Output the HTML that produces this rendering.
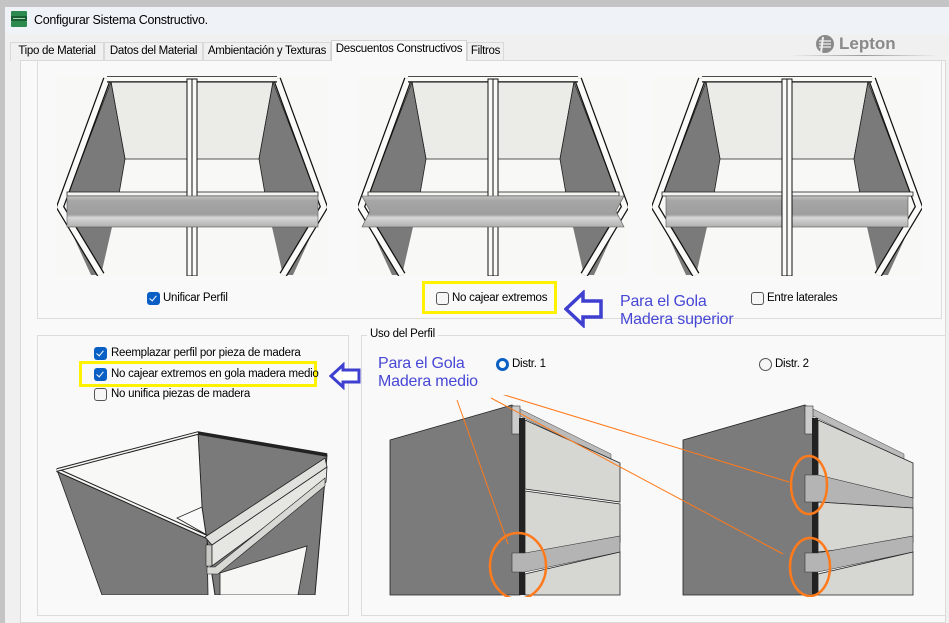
<!DOCTYPE html>
<html><head><meta charset="utf-8"><style>
*{margin:0;padding:0;box-sizing:border-box}
body{width:949px;height:623px;overflow:hidden;background:#c4c4c4;font-family:"Liberation Sans",sans-serif;font-size:12px;color:#000;position:relative}
.win{position:absolute;left:5px;top:7px;width:944px;height:616px;background:#f0f0f0}
.title{position:absolute;left:0;top:0;width:944px;height:27px;background:#eff3f8}
.abs{position:absolute}
.tab{position:absolute;top:42px;height:19px;border:1px solid #d9d9d9;border-bottom:none;background:#f0f0f0;font-size:11.5px;letter-spacing:-0.3px;padding:2px 0 0 0;text-align:center}
.page{position:absolute;left:20px;top:60px;width:926px;height:563px;background:#f9f9f9;border:1px solid #d9d9d9}
.box{position:absolute;border:1px solid #dcdcdc}
.cb{position:absolute;width:13px;height:13px;border-radius:3px}
.on{background:#0a5fc4}
.on:after{content:"";position:absolute;left:4px;top:2px;width:3px;height:6px;border:solid #fff;border-width:0 1.3px 1.3px 0;transform:rotate(40deg)}
.off{border:1px solid #555;background:#f6f6f6}
.lbl{position:absolute;font-size:11.5px;letter-spacing:-0.25px;white-space:nowrap}
.blue{position:absolute;color:#4747d6;font-size:16px;line-height:18px;letter-spacing:-0.2px}
</style></head><body>
<div class="win"></div>
<div class="title abs" style="left:5px;top:7px"></div>
<svg class="abs" style="left:11px;top:11px" width="16" height="16"><rect x="0" y="0" width="16" height="6" rx="1" fill="#2d8a4e"/><rect x="0" y="5" width="16" height="5" fill="#1b5e34"/><rect x="0" y="10" width="16" height="6" rx="1" fill="#2d8a4e"/><rect x="2" y="7" width="12" height="1" fill="#9fd9b0"/></svg>
<div class="abs" style="left:34px;top:13px;font-size:12.5px;letter-spacing:-0.3px">Configurar Sistema Constructivo.</div>

<div class="tab" style="left:10px;width:94px">Tipo de Material</div>
<div class="tab" style="left:104px;width:99px">Datos del Material</div>
<div class="tab" style="left:203px;width:128px">Ambientación y Texturas</div>
<div class="tab" style="left:467px;width:37px">Filtros</div>
<div class="page"></div>
<div class="tab" style="left:331px;top:40px;height:21px;width:136px;background:#f9f9f9;border-color:#d0d0d0">Descuentos Constructivos</div>

<div class="abs" style="left:790px;top:55px;width:148px;height:1px;background:linear-gradient(90deg,#f0f0f0,#999,#f0f0f0)"></div>
<svg class="abs" style="left:814px;top:33px" width="22" height="22"><circle cx="11" cy="11" r="9" fill="#8a8a8a"/><path d="M5 8h12M5 11h12M5 14h12" stroke="#f0f0f0" stroke-width="1.2"/><path d="M9 4l-2 16" stroke="#f0f0f0" stroke-width="2"/></svg>
<div class="abs" style="left:839px;top:34px;font-size:17px;font-weight:bold;color:#8a8a8a">Lepton</div>

<!-- top box -->
<div class="box" style="left:37px;top:60px;width:905px;height:259px;border-top:none"></div>

<svg width="0" height="0" style="position:absolute"><defs>
<linearGradient id="rg" x1="0" y1="0" x2="0" y2="1"><stop offset="0" stop-color="#c4c4c4"/><stop offset="0.15" stop-color="#a6a6a6"/><stop offset="0.6" stop-color="#9e9e9e"/><stop offset="0.7" stop-color="#d8d8d8"/><stop offset="0.85" stop-color="#c2c2c2"/><stop offset="1" stop-color="#b0b0b0"/></linearGradient>
<g id="cab">
<rect x="0" y="0" width="270" height="200" fill="#f8f8f6"/>
<polygon points="54,6 216,6 202,83 68,83" fill="#ebebe8" stroke="#222" stroke-width="0.8"/>
<polygon points="54,6 68,83 62,118 11,118" fill="#7a7a7a" stroke="#222" stroke-width="0.8"/>
<polygon points="216,6 202,83 208,118 259,118" fill="#7a7a7a" stroke="#222" stroke-width="0.8"/>
<polygon points="12,151 55,151 44,199 34,199" fill="#7a7a7a"/>
<polygon points="258,151 215,151 226,199 236,199" fill="#7a7a7a"/>
<polyline points="50,3 3,131 44,199" fill="none" stroke="#111" stroke-width="8"/>
<polyline points="50,3 3,131 44,199" fill="none" stroke="#fafaf8" stroke-width="5.5"/>
<polyline points="220,3 267,131 226,199" fill="none" stroke="#111" stroke-width="8"/>
<polyline points="220,3 267,131 226,199" fill="none" stroke="#fafaf8" stroke-width="5.5"/>
<line x1="50" y1="3" x2="220" y2="3" stroke="#111" stroke-width="7"/>
<line x1="50" y1="3" x2="220" y2="3" stroke="#fafaf8" stroke-width="4.5"/>
<rect x="10" y="116" width="251" height="4" fill="#f4f4f2" stroke="#222" stroke-width="0.8"/>
</g>
<g id="div"><rect x="130" y="3" width="10" height="197" fill="#fafaf8" stroke="#111" stroke-width="1"/><line x1="135" y1="3" x2="135" y2="200" stroke="#111" stroke-width="1"/></g>
</defs></svg>

<svg class="abs" style="left:57px;top:76px" width="270" height="200"><use href="#cab"/><use href="#div"/><rect x="10" y="120" width="251" height="31" fill="url(#rg)" stroke="#555" stroke-width="0.6"/></svg>
<svg class="abs" style="left:358px;top:76px" width="270" height="200"><use href="#cab"/><use href="#div"/><polygon points="4,120 266,120 258,135 266,151 4,151 12,135" fill="url(#rg)" stroke="#555" stroke-width="0.6"/></svg>
<svg class="abs" style="left:652px;top:76px" width="270" height="200"><use href="#cab"/><rect x="14" y="120" width="242" height="31" fill="url(#rg)" stroke="#555" stroke-width="0.6"/><use href="#div"/></svg>

<div class="cb on" style="left:147px;top:292px"></div><div class="lbl" style="left:163px;top:292px">Unificar Perfil</div>
<div class="abs" style="left:422px;top:281px;width:135px;height:33px;border:3px solid #fff200"></div>
<div class="cb off" style="left:436px;top:292px"></div><div class="lbl" style="left:452px;top:292px">No cajear extremos</div>
<svg class="abs" style="left:564px;top:290px" width="40" height="38"><polygon points="2,19 19,3 19,11 37,11 37,27 19,27 19,35" fill="#fff" stroke="#3f3fd0" stroke-width="3.5" stroke-linejoin="miter"/></svg>
<div class="blue" style="left:620px;top:293px">Para el Gola<br>Madera superior</div>
<div class="cb off" style="left:751px;top:292px"></div><div class="lbl" style="left:767px;top:292px">Entre laterales</div>

<!-- lower left box -->
<div class="box" style="left:37px;top:335px;width:312px;height:281px"></div>
<div class="cb on" style="left:94px;top:347px"></div><div class="lbl" style="left:111px;top:347px">Reemplazar perfil por pieza de madera</div>
<div class="abs" style="left:79px;top:361px;width:238px;height:26px;border:3px solid #fff200"></div>
<div class="cb on" style="left:94px;top:368px"></div><div class="lbl" style="left:111px;top:368px">No cajear extremos en gola madera medio</div>
<div class="cb off" style="left:94px;top:388px"></div><div class="lbl" style="left:111px;top:388px">No unifica piezas de madera</div>
<svg class="abs" style="left:329px;top:362px" width="33" height="28"><polygon points="2,14 14,3 14,8 30,8 30,20 14,20 14,25" fill="#fff" stroke="#3f3fd0" stroke-width="3"/></svg>

<svg class="abs" style="left:50px;top:425px" width="290" height="170" viewBox="50 425 290 170">
<polygon points="198,433 327,455 315,595 215,595 202,507" fill="#7a7a7a" stroke="#222" stroke-width="1"/>
<polygon points="57,470 198,433 202,507 177,518 207,535" fill="#f8f8f6" stroke="#222" stroke-width="0.8"/>
<polygon points="57,470 207,537 208,595 102,595" fill="#7a7a7a" stroke="#222" stroke-width="0.8"/>
<polyline points="57,470 207,537" fill="none" stroke="#222" stroke-width="4"/>
<polyline points="57,470 207,537" fill="none" stroke="#f6f6f4" stroke-width="2"/>
<polyline points="57,470 198,433 327,455" fill="none" stroke="#222" stroke-width="3.5"/>
<polyline points="57,470 198,433" fill="none" stroke="#f6f6f4" stroke-width="1.5"/>
<polygon points="220,573 307,546 298,595 220,595" fill="#f6f6f4" stroke="#222" stroke-width="0.8"/>
<polygon points="205,537 325,458 327,467 212,545" fill="#e0e0dc" stroke="#222" stroke-width="0.8"/>
<polygon points="206,545 212,545 212,566 206,566" fill="#c8c8c4" stroke="#222" stroke-width="0.6"/>
<polygon points="212,545 327,467 326,482 212,566" fill="#e6e6e2" stroke="#222" stroke-width="0.8"/>
<polygon points="207,567 215,567 325,478 325,486 218,574 207,574" fill="#d8d8d4" stroke="#222" stroke-width="0.6"/>
</svg>

<!-- lower right group -->
<div class="box" style="left:361px;top:335px;width:585px;height:281px"></div>
<div class="lbl" style="left:367px;top:328px;background:#f9f9f9;padding:0 3px">Uso del Perfil</div>
<div class="blue" style="left:378px;top:355px">Para el Gola<br>Madera medio</div>
<div class="abs" style="left:496px;top:358px;width:13px;height:13px;border-radius:50%;border:3.5px solid #0a5fc4;background:#fff"></div>
<div class="lbl" style="left:512px;top:358px">Distr. 1</div>
<div class="abs" style="left:759px;top:358px;width:13px;height:13px;border-radius:50%;border:1px solid #555;background:#f6f6f6"></div>
<div class="lbl" style="left:775px;top:358px">Distr. 2</div>

<svg class="abs" style="left:362px;top:395px" width="580" height="202" viewBox="362 395 580 202">
<g>
<polygon points="390,440 512,405 520,418 520,595 390,595" fill="#7b7b7b" stroke="#222" stroke-width="0.8"/>
<polygon points="512,405 611,454 611,461 512,412" fill="#bbb" stroke="#444" stroke-width="0.5"/>
<rect x="512" y="406" width="8" height="28" fill="#ccc" stroke="#333" stroke-width="0.6"/>
<rect x="519" y="418" width="6" height="177" fill="#222"/>
<polygon points="525,420 620,463 620,502 525,489" fill="#d6d6d2" stroke="#222" stroke-width="0.8"/>
<polygon points="525,491 620,504 620,542 525,557" fill="#d6d6d2" stroke="#222" stroke-width="0.8"/>
<polygon points="512,553 525,553 620,536 620,552 525,572 512,572" fill="#b4b4b4" stroke="#333" stroke-width="0.6"/>
<polygon points="525,574 620,552 620,595 525,595" fill="#d6d6d2" stroke="#222" stroke-width="0.8"/>
</g>
<g transform="translate(293,0)">
<polygon points="390,440 512,405 520,418 520,595 390,595" fill="#7b7b7b" stroke="#222" stroke-width="0.8"/>
<polygon points="512,405 611,454 611,461 512,412" fill="#bbb" stroke="#444" stroke-width="0.5"/>
<rect x="512" y="406" width="8" height="28" fill="#ccc" stroke="#333" stroke-width="0.6"/>
<rect x="519" y="418" width="6" height="177" fill="#222"/>
<polygon points="525,420 620,463 620,498 525,480" fill="#d6d6d2" stroke="#222" stroke-width="0.8"/>
<polygon points="512,475 525,475 620,498 620,508 525,502 512,502" fill="#b4b4b4" stroke="#333" stroke-width="0.6"/>
<polygon points="525,502 620,508 620,542 525,552" fill="#d6d6d2" stroke="#222" stroke-width="0.8"/>
<polygon points="512,553 525,553 620,536 620,552 525,572 512,572" fill="#b4b4b4" stroke="#333" stroke-width="0.6"/>
<polygon points="525,574 620,552 620,595 525,595" fill="#d6d6d2" stroke="#222" stroke-width="0.8"/>
</g>
<g stroke="#ff7a1a" fill="none">
<line x1="457" y1="400" x2="508" y2="544" stroke-width="1"/>
<line x1="491" y1="398" x2="783" y2="554" stroke-width="1"/>
<line x1="498" y1="393" x2="789" y2="482" stroke-width="1"/>
<ellipse cx="518" cy="566" rx="28" ry="33" stroke-width="2.5"/>
<ellipse cx="809" cy="485" rx="18" ry="29" stroke-width="2.5"/>
<ellipse cx="810" cy="567" rx="20" ry="29" stroke-width="2.5"/>
</g>
</svg>
</body></html>
